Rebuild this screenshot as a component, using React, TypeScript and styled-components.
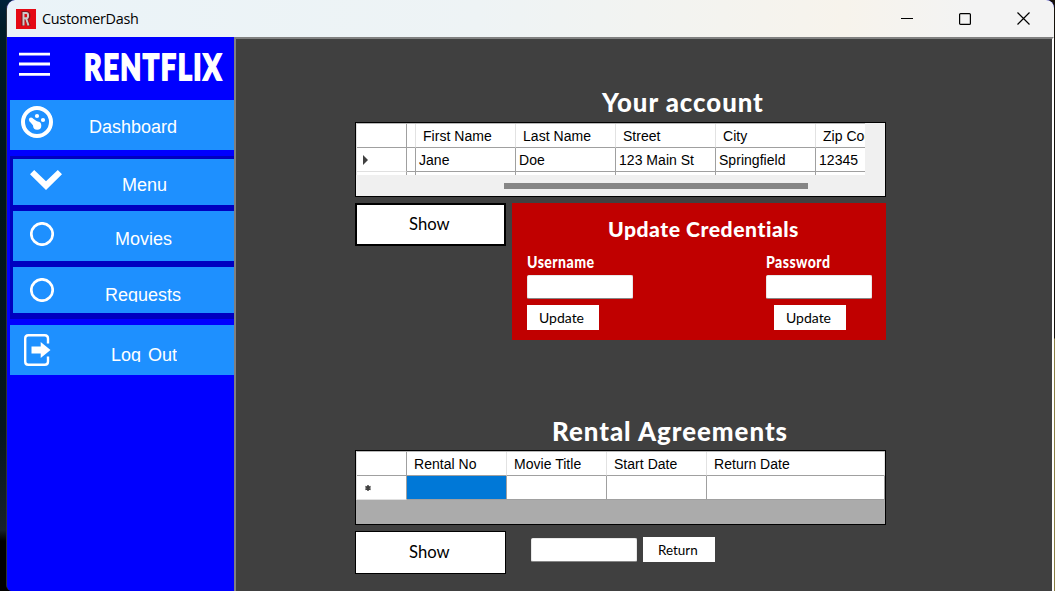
import React from "react";
import styled, { createGlobalStyle } from "styled-components";

const GlobalStyle = createGlobalStyle`
  * { box-sizing: border-box; }
  html, body { margin: 0; padding: 0; overflow: hidden; }
  body { font-family: "Liberation Sans", Arial, sans-serif; color: #000; }
  button, input { font: inherit; border-radius: 0; margin: 0; padding: 0; }
`;

const futura = `Lato, "Open Sans", sans-serif`;

const Desktop = styled.div`
  display: flex;
  width: 1055px;
  height: 591px;
  padding: 0 1px 0 6px;
  background:
    linear-gradient(#15110a 0 338px, #8b8045 339px) right / 1px 100% no-repeat,
    linear-gradient(#15110a, #15110a) right top / 12px 12px no-repeat,
    linear-gradient(#00223a 0, #001c28 28px, #00161d 160px, #06171f 430px, #18232b 530px, #000 541px);
`;

const Window = styled.div`
  display: flex;
  flex-direction: column;
  width: 1048px;
  border-left: 1px solid #303336;
  border-radius: 9px 9px 0 6px;
  border-top-right-radius: 8px;
  overflow: hidden;
  background: #0000ff;
`;

const TitleBar = styled.header`
  display: flex;
  align-items: center;
  flex: none;
  height: 37px;
  padding-left: 9px;
  background: linear-gradient(90deg, #eaf3f8 0, #eef3f5 45%, #f7f3ec 80%, #f3f3f3 92%);
`;

const Caption = styled.span`
  flex: 1;
  margin-left: 6px;
  font: 14.4px/20px "Open Sans", "Noto Sans", sans-serif;
  letter-spacing: -0.28px;
`;

const Controls = styled.div`
  display: flex;
  align-items: center;
  gap: 46px;
  padding-right: 24px;
  svg { display: block; }
`;

const Body = styled.div`
  display: flex;
  flex: 1;
  min-height: 0;
`;

const Sidebar = styled.nav`
  width: 227px;
  flex: none;
  padding-left: 3px;
  background: #0000ff;
`;

const Brand = styled.div`
  display: flex;
  height: 63px;
  padding: 15px 0 0 9px;
  svg { flex: none; }
`;

const Logo = styled.h1`
  margin: -8px 0 0 33px;
  font: 900 36px/44px ${futura};
  letter-spacing: 2px;
  color: #fff;
  white-space: nowrap;
  -webkit-text-stroke: 1.8px #fff;
  transform: scaleX(0.755);
  transform-origin: left;
`;

const NavItem = styled.button<{ $h: number }>`
  display: flex;
  width: 100%;
  height: ${(p) => p.$h}px;
  border: 0;
  background: #1e90ff;
  color: #fff;
  text-align: left;
`;

const NavIcon = styled.span<{ $left: number; $top: number }>`
  flex: none;
  width: 60px;
  padding: ${(p) => p.$top}px 0 0 ${(p) => p.$left}px;
  svg { display: block; }
`;

const NavText = styled.span<{ $left: number; $top: number; $clip?: number; $gap?: number }>`
  display: block;
  height: ${(p) => p.$clip ?? 22}px;
  margin: ${(p) => p.$top}px 0 0 ${(p) => p.$left}px;
  overflow: hidden;
  white-space: nowrap;
  font-size: 18px;
  line-height: 20px;
  word-spacing: ${(p) => p.$gap ?? 0}px;
`;

const SubMenu = styled.div`
  display: flex;
  flex-direction: column;
  gap: 6px;
  height: 163px;
  margin: 6px 0;
  padding: 3px 0 0 3px;
  background: #0000bf;
`;

const Main = styled.main`
  flex: 1;
  padding: 46px 0 0 119px;
  background: #404040;
  border: solid;
  border-width: 2px 2px 0 2px;
  border-color: #808080 #fff #808080 #808080;
`;

const Section = styled.section`
  width: 531px;
`;

const Stretch = styled.span<{ $x: number }>`
  display: inline-block;
  white-space: nowrap;
  transform: scaleX(${(p) => p.$x});
  transform-origin: left;
`;

const Heading = styled.h2<{ $left: number; $size: number; $h: number; $track?: number }>`
  height: ${(p) => p.$h}px;
  margin: 0;
  padding-left: ${(p) => p.$left}px;
  font: 900 ${(p) => p.$size}px/34px ${futura};
  letter-spacing: ${(p) => p.$track ?? 0}px;
  color: #fff;
`;

const Grid = styled.div<{ $fill: string }>`
  height: 75px;
  border: 1px solid #000;
  background: ${(p) => p.$fill};
  overflow: hidden;
`;

const GridView = styled.div<{ $w: number; $h: number }>`
  width: ${(p) => p.$w}px;
  height: ${(p) => p.$h}px;
  overflow: hidden;
  border-left: 1px solid #e0e0e0;
  border-top: 1px solid #b8b8b8;
  background: #fff;
`;

const GridRow = styled.div<{ $cols: string; $h: number }>`
  display: grid;
  grid-template-columns: ${(p) => p.$cols};
  height: ${(p) => p.$h}px;
`;

const Cell = styled.div<{ $head?: boolean; $on?: boolean }>`
  padding-left: ${(p) => (p.$head ? 7 : 3)}px;
  border-right: 1px solid ${(p) => (p.$head ? "#e2e2e2" : "#a0a0a0")};
  border-bottom: 1px solid #a0a0a0;
  background: ${(p) => (p.$on ? "#0078d7" : "#fff")};
  overflow: hidden;
  white-space: nowrap;
  font-size: 14px;
  letter-spacing: 0.03px;
  line-height: ${(p) => (p.$head ? 24 : 25)}px;
`;

const RowHead = styled.div<{ $soft?: boolean }>`
  display: flex;
  align-items: center;
  padding-top: 1px;
  border-right: 1px solid #a0a0a0;
  border-bottom: 1px solid ${(p) => (p.$soft ? "#e0e0e0" : "#a0a0a0")};
  background: #fff;
`;

const Thumb = styled.div`
  width: 304px;
  height: 6px;
  margin: 8px 0 0 148px;
  background: #868686;
`;

const Actions = styled.div`
  display: flex;
  margin-top: 6px;
`;

const ShowButton = styled.button<{ $border: number }>`
  width: 151px;
  height: 43px;
  flex: none;
  border: ${(p) => p.$border}px solid #000;
  background: #fff;
  color: #000;
  text-align: left;
  font: 400 17px/20px ${futura};
  padding: 0 0 2px ${(p) => 54 - p.$border}px;
`;

const SmallButton = styled.button<{ $ml?: number; $pad?: number }>`
  display: block;
  width: 72px;
  height: 25px;
  margin-left: ${(p) => p.$ml ?? 0}px;
  padding-left: ${(p) => p.$pad ?? 12}px;
  border: 0;
  background: #fff;
  color: #000;
  text-align: left;
  font: 400 14px/25px ${futura};
`;

const Field = styled.input`
  display: block;
  width: 106px;
  height: 24px;
  border: 1px solid #e8e8e8;
  border-bottom-color: #868686;
  border-radius: 2px;
  background: #fff;
`;

const Credentials = styled.div`
  width: 374px;
  height: 137px;
  margin-left: 6px;
  padding-top: 9px;
  background: #c00000;
`;

const Fields = styled.div`
  display: flex;
  justify-content: space-between;
  padding: 1px 14px 0 15px;
`;

const FieldGroup = styled.div`
  width: 106px;
`;

const FieldLabel = styled.label`
  display: block;
  height: 25px;
  font: 900 16px/24px ${futura};
  letter-spacing: 0.5px;
  color: #fff;
`;

const FieldGap = styled.div`
  height: 6px;
`;

const ReturnRow = styled.div`
  display: flex;
  align-items: center;
  gap: 6px;
  height: 37px;
  margin-left: 25px;
`;

const AccountArea = styled.div`
  height: 329px;
`;

function AppIcon() {
  return (
    <svg width="20" height="20" viewBox="0 0 20 20">
      <rect width="20" height="20" fill="#e50914" />
      <path d="M7 17V3.5h3.5a2.3 2.3 0 0 1 2.3 2.4v1.6a2.3 2.3 0 0 1-2.3 2.3H8.500M10.300 10l2.900 7" fill="none" stroke="#7e1a1e" strokeWidth="3.200" />
      <path d="M7.500 16.500V4h2.800a1.700 1.700 0 0 1 1.700 1.800v1.700a1.700 1.700 0 0 1-1.700 1.800H8.500M10.300 10l2.200 6.500" fill="none" stroke="#d0c8c8" strokeWidth="2" />
    </svg>
  );
}

const GaugeIcon = () => (
  <svg width="32" height="32" viewBox="0 0 32 32" fill="#fff">
    <circle cx="16" cy="16" r="14" fill="none" stroke="#fff" strokeWidth="4" />
    <circle cx="16" cy="10" r="2.100" />
    <circle cx="22" cy="14" r="2.100" />
    <circle cx="10" cy="13.700" r="2.100" />
    <circle cx="16.200" cy="19.700" r="4.100" />
    <path d="M8.500 15.200 11.600 12.200 19 17.500l-4.500 4.800Z" />
  </svg>
);

const RingIcon = () => (
  <svg width="24" height="24" viewBox="0 0 24 24">
    <circle cx="12" cy="12" r="10.700" fill="none" stroke="#fff" strokeWidth="2.700" />
  </svg>
);

const ChevronIcon = () => (
  <svg width="32" height="20" viewBox="0 0 32 20">
    <path d="M0 4.300 4.200 0 16 11.300 27.800 0 32 4.300 16 20Z" fill="#fff" />
  </svg>
);

const ExitIcon = () => (
  <svg width="27" height="32" viewBox="0 0 27 32">
    <path d="M24 9.500V4.500q0-3.300-3.300-3.300H4.300Q1.200 1.200 1.200 4.500v23q0 3.300 3.100 3.300h16.400q3.300 0 3.300-3.300v-5" fill="none" stroke="#fff" strokeWidth="2.400" />
    <path d="M7.500 12.500h9.200V8L26.500 16l-9.800 8v-4.500H7.500Z" fill="#fff" />
  </svg>
);

const accountCols = "50px 9px 100px 100px 100px 100px 100px";
const rentalCols = "50px 100px 100px 100px 178px";

export default function App() {
  return (
    <>
      <GlobalStyle />
      <Desktop>
        <Window>
          <TitleBar>
            <AppIcon />
            <Caption>CustomerDash</Caption>
            <Controls>
              <svg width="12" height="12"><path d="M0 5.500h12" stroke="#000" /></svg>
              <svg width="12" height="12"><rect x=".6" y=".6" width="10.800" height="10.800" rx="1" fill="none" stroke="#000" strokeWidth="1.200" /></svg>
              <svg width="13" height="13"><path d="M.5.5l12 12M12.500.5l-12 12" stroke="#000" strokeWidth="1.200" /></svg>
            </Controls>
          </TitleBar>
          <Body>
            <Sidebar>
              <Brand>
                <svg width="32" height="25" viewBox="0 0 32 25">
                  <path d="M0 2.200h31M0 12h31M0 22.300h31" stroke="#fff" strokeWidth="2.800" />
                </svg>
                <Logo>RENTFLIX</Logo>
              </Brand>
              <NavItem $h={50}>
                <NavIcon $left={11} $top={6}><GaugeIcon /></NavIcon>
                <NavText $left={19} $top={17}>Dashboard</NavText>
              </NavItem>
              <SubMenu>
                <NavItem $h={46}>
                  <NavIcon $left={17} $top={11}><ChevronIcon /></NavIcon>
                  <NavText $left={49} $top={16}>Menu</NavText>
                </NavItem>
                <NavItem $h={50}>
                  <NavIcon $left={17} $top={11}><RingIcon /></NavIcon>
                  <NavText $left={42} $top={18}>Movies</NavText>
                </NavItem>
                <NavItem $h={46}>
                  <NavIcon $left={17} $top={11}><RingIcon /></NavIcon>
                  <NavText $left={32} $top={18} $clip={17}>Requests</NavText>
                </NavItem>
              </SubMenu>
              <NavItem $h={50}>
                <NavIcon $left={14} $top={9}><ExitIcon /></NavIcon>
                <NavText $left={41} $top={20} $clip={17} $gap={2}>Log Out</NavText>
              </NavItem>
            </Sidebar>
            <Main>
              <AccountArea>
                <Section>
                  <Heading $left={247} $size={26} $h={37} $track={1}><Stretch $x={0.99}>Your account</Stretch></Heading>
                  <Grid $fill="#f0f0f0">
                    <GridView $w={509} $h={52}>
                      <GridRow $cols={accountCols} $h={24}>
                        <RowHead />
                        <Cell $head />
                        <Cell $head>First Name</Cell>
                        <Cell $head>Last Name</Cell>
                        <Cell $head>Street</Cell>
                        <Cell $head>City</Cell>
                        <Cell $head>Zip Code</Cell>
                      </GridRow>
                      <GridRow $cols={accountCols} $h={24}>
                        <RowHead $soft>
                          <svg width="14" height="10" viewBox="0 0 14 10"><path d="M6 0l5 5-5 5Z" fill="#404040" /></svg>
                        </RowHead>
                        <Cell />
                        <Cell>Jane</Cell>
                        <Cell>Doe</Cell>
                        <Cell>123 Main St</Cell>
                        <Cell>Springfield</Cell>
                        <Cell>12345</Cell>
                      </GridRow>
                      <GridRow $cols={accountCols} $h={24}>
                        <RowHead /><Cell /><Cell /><Cell /><Cell /><Cell /><Cell />
                      </GridRow>
                    </GridView>
                    <Thumb />
                  </Grid>
                  <Actions>
                    <ShowButton $border={2}><Stretch $x={0.98}>Show</Stretch></ShowButton>
                    <Credentials>
                      <Heading $left={96} $size={21} $h={37} $track={0.5}><Stretch $x={1.008}>Update Credentials</Stretch></Heading>
                      <Fields>
                        <FieldGroup>
                          <FieldLabel><Stretch $x={0.88}>Username</Stretch></FieldLabel>
                          <Field aria-label="Username" />
                          <FieldGap />
                          <SmallButton>Update</SmallButton>
                        </FieldGroup>
                        <FieldGroup>
                          <FieldLabel><Stretch $x={0.88}>Password</Stretch></FieldLabel>
                          <Field aria-label="Password" />
                          <FieldGap />
                          <SmallButton $ml={8}>Update</SmallButton>
                        </FieldGroup>
                      </Fields>
                    </Credentials>
                  </Actions>
                </Section>
              </AccountArea>
              <Section>
                <Heading $left={197} $size={26} $h={36} $track={1}><Stretch $x={0.993}>Rental Agreements</Stretch></Heading>
                <Grid $fill="#ababab">
                  <GridView $w={529} $h={49}>
                    <GridRow $cols={rentalCols} $h={24}>
                      <RowHead />
                      <Cell $head>Rental No</Cell>
                      <Cell $head>Movie Title</Cell>
                      <Cell $head>Start Date</Cell>
                      <Cell $head>Return Date</Cell>
                    </GridRow>
                    <GridRow $cols={rentalCols} $h={24}>
                      <RowHead $soft>
                        <svg width="16" height="8" viewBox="0 0 16 8"><path d="M11 1v6M8.400 2.500l5.200 3M8.400 5.500l5.200-3" stroke="#404040" strokeWidth="1.500" /></svg>
                      </RowHead>
                      <Cell $on />
                      <Cell />
                      <Cell />
                      <Cell />
                    </GridRow>
                  </GridView>
                </Grid>
                <Actions>
                  <ShowButton $border={1}><Stretch $x={0.98}>Show</Stretch></ShowButton>
                  <ReturnRow>
                    <Field aria-label="Rental number" />
                    <SmallButton $pad={15}><Stretch $x={0.96}>Return</Stretch></SmallButton>
                  </ReturnRow>
                </Actions>
              </Section>
            </Main>
          </Body>
        </Window>
      </Desktop>
    </>
  );
}
